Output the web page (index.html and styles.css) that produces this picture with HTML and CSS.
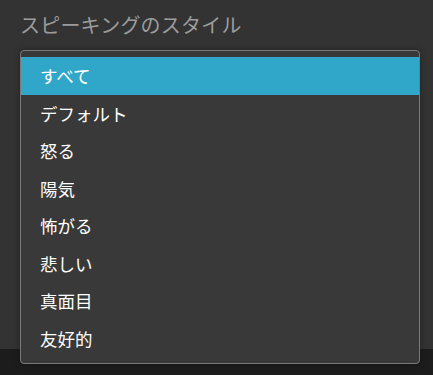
FILE: index.html
```html
<!DOCTYPE html>
<html lang="ja">
<head>
<meta charset="utf-8">
<link rel="stylesheet" href="styles.css">
</head>
<body>
<div class="page">
  <div class="title">スピーキングのスタイル</div>
  <div class="spacer"></div>
  <div class="footer"></div>
  <ul class="menu">
    <li class="item selected">すべて</li>
    <li class="item">デフォルト</li>
    <li class="item">怒る</li>
    <li class="item">陽気</li>
    <li class="item">怖がる</li>
    <li class="item">悲しい</li>
    <li class="item">真面目</li>
    <li class="item">友好的</li>
  </ul>
</div>
</body>
</html>
```

FILE: styles.css
```css
html, body {
  margin: 0;
  padding: 0;
}
body {
  background: #333333;
  font-family: "Noto Sans CJK JP", "Noto Sans", sans-serif;
}
.page {
  position: relative;
  width: 433px;
  height: 375px;
  display: flex;
  flex-direction: column;
  overflow: hidden;
}
.title {
  padding: 11px 0 0 20px;
  font-size: 20px;
  line-height: 28px;
  color: #9c9c9c;
  letter-spacing: 0.2px;
}
.spacer {
  flex: 1;
}
.footer {
  height: 26px;
  background: #1c1c1c;
}
.menu {
  position: absolute;
  top: 50px;
  left: 20px;
  width: 400px;
  height: 314px;
  box-sizing: border-box;
  margin: 0;
  padding: 6px 0 6px 0;
  list-style: none;
  background: #393939;
  border: 1px solid #7a7a7a;
  border-radius: 4px;
  box-shadow: 0 0 6px rgba(0, 0, 0, 0.35);
}
.item {
  height: 37.5px;
  line-height: 37.5px;
  padding-left: 19px;
  font-size: 17.5px;
  font-weight: 400;
  color: #ffffff;
}
.item.selected {
  background: #30a6c9;
  color: #ffffff;
}
```
